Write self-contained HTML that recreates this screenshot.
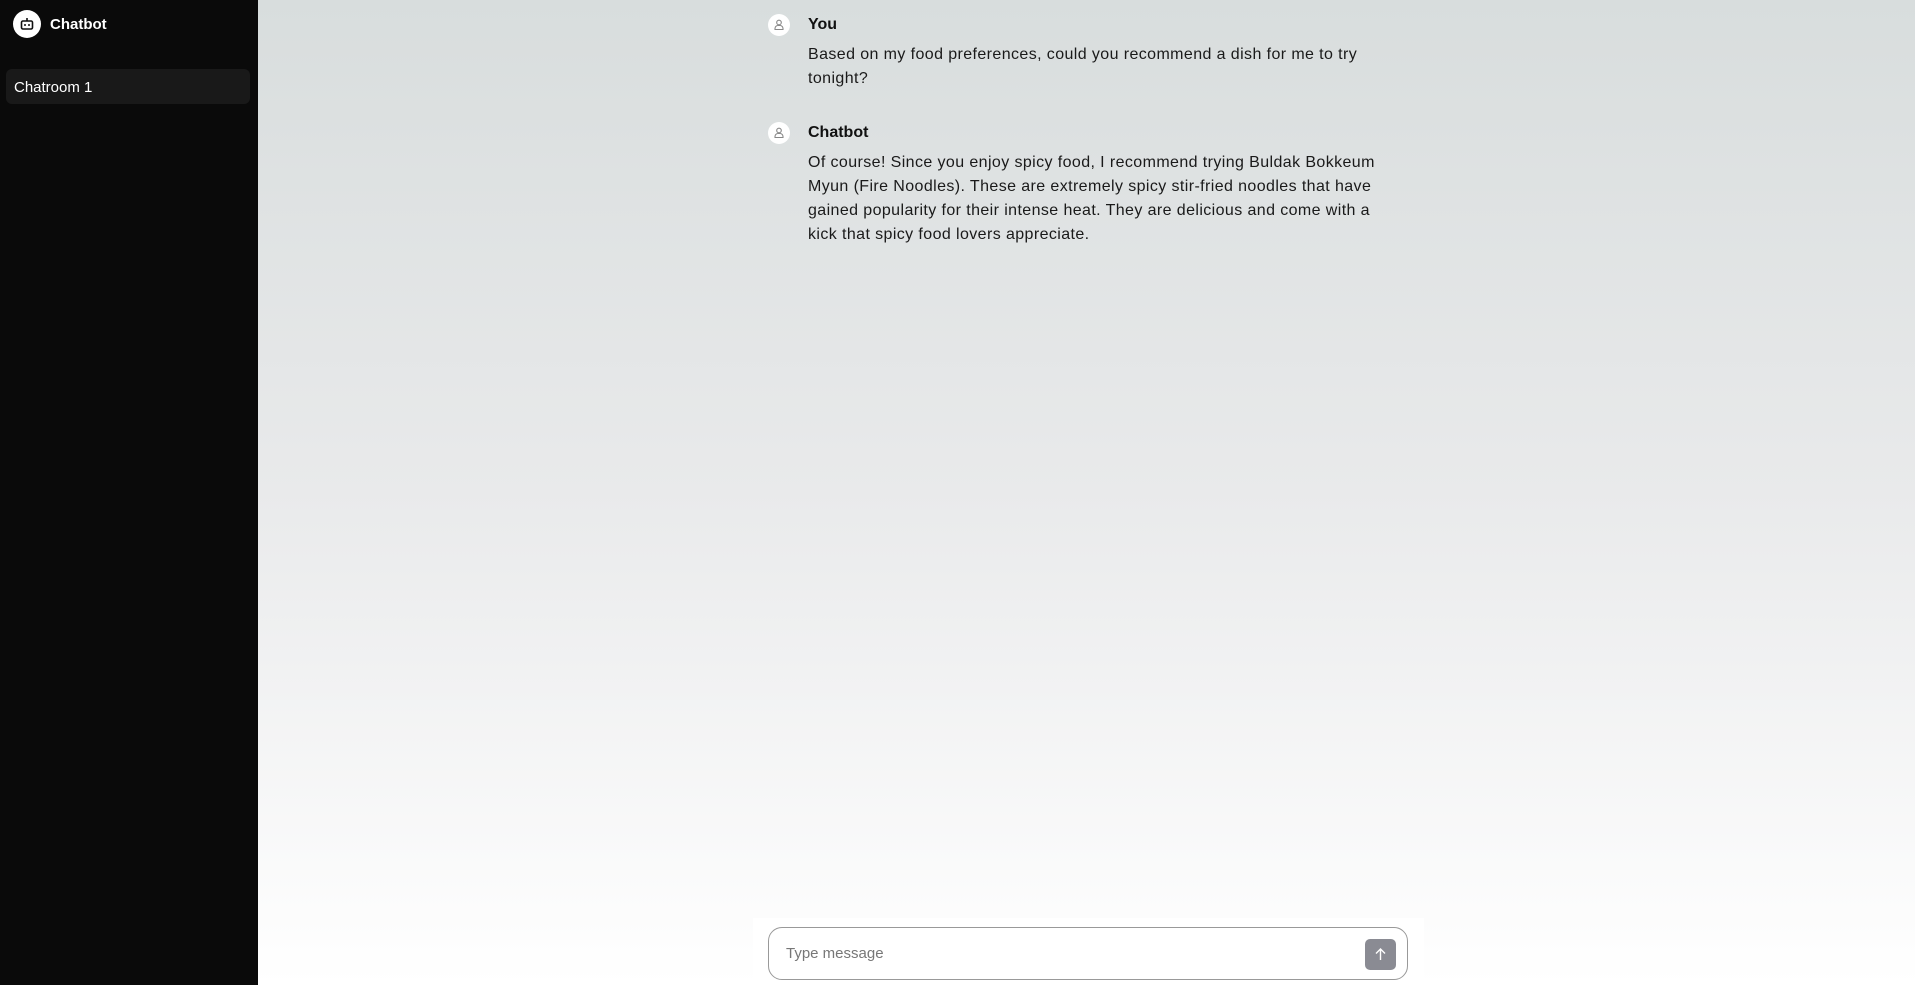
<!DOCTYPE html>
<html><head><meta charset="utf-8"><style>
*{box-sizing:border-box;margin:0;padding:0}
body{width:1915px;height:985px;overflow:hidden;font-family:"Liberation Sans",sans-serif;position:relative;background:linear-gradient(#d8dddd,#e9eaeb 50%,#ffffff)}
.side{position:absolute;left:0;top:0;width:258px;height:985px;background:#0a0a0a;color:#fff}
.logo{position:absolute;left:13px;top:10px;width:28px;height:28px;border-radius:50%;background:#fff}
.brand{position:absolute;left:50px;top:16px;font-size:15px;font-weight:bold}
.room{position:absolute;left:6px;top:69px;width:244px;height:35px;border-radius:6px;background:#191919;font-size:15px;padding:10px 0 0 8px}
.msg{position:absolute;left:768px;width:640px}
.av{position:absolute;left:0;top:0;width:22px;height:22px;border-radius:50%;background:#fff}
.name{position:absolute;left:40px;top:2px;font-weight:bold;font-size:16px;color:#111}
.txt{position:absolute;left:40px;top:29px;width:590px;font-size:16px;letter-spacing:0.4px;line-height:24px;color:#1a1a1a}
.strip{position:absolute;left:753px;top:918px;width:671px;height:67px;background:#fff}
.box{position:absolute;left:768px;top:927px;width:640px;height:53px;border:1px solid #999;border-radius:14px;background:#fff}
.ph{position:absolute;left:17px;top:17px;font-size:15px;color:#777}
.btn{position:absolute;left:596px;top:11px;width:31px;height:31px;border-radius:5px;background:#8a8b93}
</style></head><body>
<div class="side">
<div class="logo"><svg width="28" height="28" viewBox="0 0 28 28"><rect x="8.5" y="11" width="11" height="8" rx="1.5" fill="none" stroke="#111" stroke-width="1.6"/><line x1="14" y1="8" x2="14" y2="11" stroke="#111" stroke-width="1.6"/><circle cx="12" cy="15" r="1" fill="#111"/><circle cx="16" cy="15" r="1" fill="#111"/></svg></div>
<div class="brand">Chatbot</div>
<div class="room">Chatroom 1</div>
</div>
<div class="msg" style="top:14px">
<div class="av"><svg width="22" height="22" viewBox="0 0 22 22"><circle cx="11" cy="8.5" r="2.3" fill="none" stroke="#888" stroke-width="1.1"/><path d="M7 15.5v-1a3 3 0 0 1 3-3h2a3 3 0 0 1 3 3v1z" fill="none" stroke="#888" stroke-width="1.1"/></svg></div>
<div class="name">You</div>
<div class="txt">Based on my food preferences, could you recommend a dish for me to try tonight?</div>
</div>
<div class="msg" style="top:122px">
<div class="av"><svg width="22" height="22" viewBox="0 0 22 22"><circle cx="11" cy="8.5" r="2.3" fill="none" stroke="#888" stroke-width="1.1"/><path d="M7 15.5v-1a3 3 0 0 1 3-3h2a3 3 0 0 1 3 3v1z" fill="none" stroke="#888" stroke-width="1.1"/></svg></div>
<div class="name">Chatbot</div>
<div class="txt">Of course! Since you enjoy spicy food, I recommend trying Buldak Bokkeum Myun (Fire Noodles). These are extremely spicy stir-fried noodles that have gained popularity for their intense heat. They are delicious and come with a kick that spicy food lovers appreciate.</div>
</div>
<div class="strip"></div>
<div class="box"><div class="ph">Type message</div>
<div class="btn"><svg width="31" height="31" viewBox="0 0 31 31"><path d="M15.5 21V10M11 14.5l4.5-4.5 4.5 4.5" fill="none" stroke="#fff" stroke-width="1.4"/></svg></div></div>
</body></html>
